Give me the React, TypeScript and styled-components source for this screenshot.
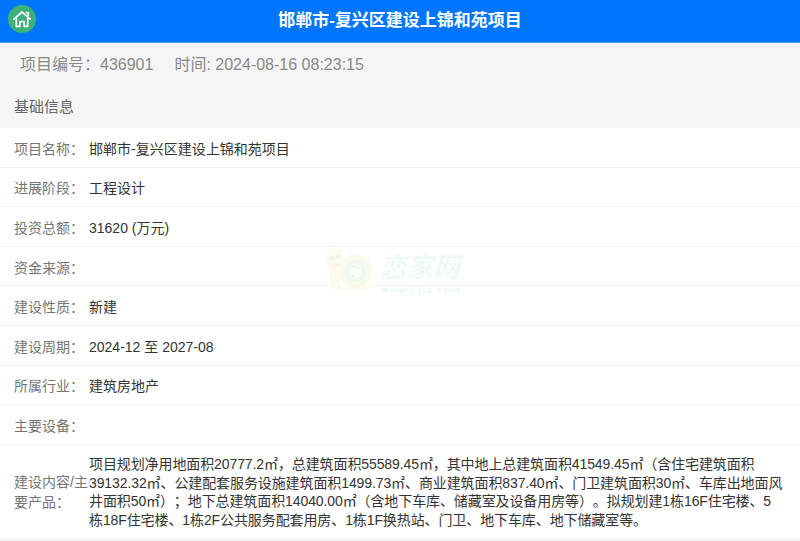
import React from "react";
import styled, { createGlobalStyle } from "styled-components";

const Global = createGlobalStyle`
  html, body { margin: 0; padding: 0; background: #f5f5f5; }
  body { font-family: "Liberation Sans", "Noto Sans CJK SC", sans-serif; overflow: hidden; text-spacing-trim: space-all; }
`;
const Page = styled.div`
  position: relative;
  width: 800px;
  height: 541px;
  overflow: hidden;
  background: #f5f5f5;
`;
const Header = styled.header`
  position: relative;
  display: flex;
  align-items: center;
  justify-content: center;
  height: 43px;
  padding-bottom: 5px;
  background: #0076ff;
  border-bottom: 1px solid #4a9dff;
  box-sizing: border-box;
`;
const Title = styled.h1`
  margin: 0;
  color: #fff;
  font-size: 17px;
  font-weight: 700;
`;
const HomeButton = styled.a`
  position: absolute;
  left: 8px;
  top: 5px;
  width: 28px;
  height: 28px;
  border-radius: 50%;
  background: #3cb179;
  display: flex;
  align-items: center;
  justify-content: center;
`;
const Meta = styled.div`
  display: flex;
  align-items: center;
  gap: 21px;
  box-sizing: border-box;
  height: 43px;
  padding: 0 0 4px 20px;
  color: #888;
  font-size: 16px;
`;
const Section = styled.div`
  height: 42px;
  line-height: 41px;
  padding-left: 14px;
  color: #666;
  font-size: 15px;
`;
const List = styled.div`
  background: #fff;
`;
const Row = styled.div`
  display: flex;
  align-items: center;
  box-sizing: border-box;
  height: 39.6px;
  padding: 3px 14px 0;
  border-bottom: 1px solid #f3f3f3;
  font-size: 14px;
  line-height: 20px;
  color: #333;
`;
const TallRow = styled(Row)`
  height: 93px;
  padding-top: 2px;
  border-bottom: none;
`;
const Label = styled.div`
  flex: 0 0 75px;
  color: #757575;
`;
const Value = styled.div`
  flex: 1;
  color: #333;
  line-height: 18.4px;
  font-size: 14px;
`;
const LongValue = styled(Value)`
  letter-spacing: -0.1px;
  padding-right: 2px;
`;
const Watermark = styled.div`
  position: absolute;
  left: 324px;
  top: 246px;
  width: 140px;
  height: 52px;
  pointer-events: none;
`;
const MarkName = styled.span`
  position: absolute;
  left: 55px;
  top: 5px;
  font-size: 27px;
  line-height: 34px;
  font-style: italic;
  font-weight: 700;
  color: #eff9f4;
  white-space: nowrap;
`;
const MarkSite = styled.span`
  position: absolute;
  left: 57px;
  top: 38px;
  font-size: 9.5px;
  font-weight: 700;
  line-height: 12px;
  letter-spacing: 1.4px;
  color: #ecf6f1;
  white-space: nowrap;
`;

const rows: [string, string][] = [
  ["项目名称：", "邯郸市-复兴区建设上锦和苑项目"],
  ["进展阶段：", "工程设计"],
  ["投资总额：", "31620 (万元)"],
  ["资金来源：", ""],
  ["建设性质：", "新建"],
  ["建设周期：", "2024-12 至 2027-08"],
  ["所属行业：", "建筑房地产"],
  ["主要设备：", ""],
];

export default function App() {
  return (
    <Page>
      <Global />
      <Header>
        <HomeButton aria-label="首页">
          <svg width="20" height="20" viewBox="0 0 20 20" fill="none" stroke="#fff" strokeWidth="1.7" strokeLinejoin="round" strokeLinecap="round">
            <path d="M1.8 10.2 10 3l8.2 7.2" />
            <path d="M4.3 9v8.3h3.6v-4.8h4.2v4.8h3.6V9" />
            <path d="M14.5 3.6h1.8v2.6" />
          </svg>
        </HomeButton>
        <Title>邯郸市-复兴区建设上锦和苑项目</Title>
      </Header>
      <Meta>
        <span>项目编号：436901</span>
        <span>时间: 2024-08-16 08:23:15</span>
      </Meta>
      <Section>基础信息</Section>
      <List>
        {rows.map(([k, v]) => (
          <Row key={k}>
            <Label>{k}</Label>
            <Value>{v}</Value>
          </Row>
        ))}
        <TallRow>
          <Label>建设内容/主要产品：</Label>
          <LongValue>
            项目规划净用地面积20777.2㎡，总建筑面积55589.45㎡，其中地上总建筑面积41549.45㎡（含住宅建筑面积39132.32㎡、公建配套服务设施建筑面积1499.73㎡、商业建筑面积837.40㎡、门卫建筑面积30㎡、车库出地面风井面积50㎡）；地下总建筑面积14040.00㎡（含地下车库、储藏室及设备用房等）。拟规划建1栋16F住宅楼、5栋18F住宅楼、1栋2F公共服务配套用房、1栋1F换热站、门卫、地下车库、地下储藏室等。
          </LongValue>
        </TallRow>
      </List>
      <Watermark>
        <svg width="56" height="50" viewBox="0 0 56 50" fill="none">
          <path d="M5 18v22q0 4 5 4h28q12-1 16-7-8 3-18 2H16V18z" fill="#fdfbf0" />
          <ellipse cx="11" cy="13" rx="9" ry="10" fill="#fdfaee" />
          <circle cx="8" cy="12" r="2.6" fill="#f4f2ec" />
          <circle cx="14" cy="11" r="2.6" fill="#f4f2ec" />
          <path d="M7 19q4 2 8-1" stroke="#f7eee0" strokeWidth="1" />
          <path d="M9 4 7.5 0M15 5l3-4" stroke="#f9f3dc" strokeWidth="1.2" />
          <circle cx="31" cy="25" r="17" fill="#f8faec" />
          <circle cx="31" cy="25" r="11" fill="#eff8f0" />
          <circle cx="31" cy="25" r="7" fill="#fcfdf8" />
          <path d="M31 30a5 5 0 1 1 4-7" stroke="#ebf6ed" strokeWidth="2" />
        </svg>
        <MarkName>恋家网</MarkName>
        <MarkSite>www.Ljia.com</MarkSite>
      </Watermark>
    </Page>
  );
}
